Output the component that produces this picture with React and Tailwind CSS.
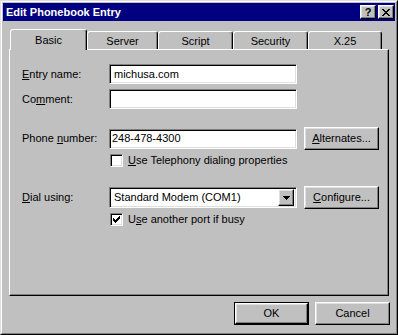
import React from 'react';

const raised = 'border border-t-white border-l-white border-r-black border-b-black shadow-[inset_-1px_-1px_#808080,inset_1px_1px_#dfdfdf]';
const sunken = 'border border-t-[#808080] border-l-[#808080] border-r-white border-b-white shadow-[inset_1px_1px_#000,inset_-1px_-1px_#dfdfdf]';

const Btn = ({ children, isDefault }) => {
    if (isDefault) {
        return (
            <div className="w-[75px] h-[23px] border border-black">
                <div className={`h-full flex items-center justify-center ${raised}`}>{children}</div>
            </div>
        );
    }
    return <div className={`w-[75px] h-[23px] flex items-center justify-center ${raised}`}>{children}</div>;
};

const Check = ({ checked }) => (
    <div className={`w-[13px] h-[13px] bg-white shrink-0 ${sunken} flex items-center justify-center`}>
        {checked && (
            <svg width="7" height="7" viewBox="0 0 7 7" shapeRendering="crispEdges">
                <rect x="6" y="0" width="1" height="1" fill="#000" />
                <rect x="5" y="1" width="2" height="1" fill="#000" />
                <rect x="0" y="2" width="1" height="1" fill="#000" />
                <rect x="4" y="2" width="3" height="1" fill="#000" />
                <rect x="0" y="3" width="2" height="1" fill="#000" />
                <rect x="3" y="3" width="3" height="1" fill="#000" />
                <rect x="0" y="4" width="5" height="1" fill="#000" />
                <rect x="1" y="5" width="3" height="1" fill="#000" />
                <rect x="2" y="6" width="1" height="1" fill="#000" />
            </svg>
        )}
    </div>
);

const Tab = ({ label, width, active }) => (
    <div
        className={`${width} flex items-center justify-center rounded-t-[3px] border-l border-t border-r border-t-white border-l-white border-r-black shadow-[inset_-1px_0_#808080] bg-[#c0c0c0] ${
            active ? 'h-[21px] mb-[-1px] relative z-10' : 'h-[18px] pt-[2px]'
        }`}
    >
        {label}
    </div>
);

const Label = ({ children }) => <div className="w-[87px] shrink-0">{children}</div>;

export default function App() {
    return (
        <div
            className="w-[398px] h-[335px] bg-[#c0c0c0] text-black text-[11px] leading-none border border-t-[#dfdfdf] border-l-[#dfdfdf] border-r-black border-b-black select-none"
            style={{ fontFamily: '"Liberation Sans", Arial, sans-serif' }}
        >
            <div className="h-full p-px border border-t-white border-l-white border-r-[#808080] border-b-[#808080] flex flex-col">
                {/* title bar */}
                <div className="h-[18px] bg-[#000080] flex items-center justify-between pl-[3px] pr-[1px]">
                    <span className="text-white font-bold text-[11px]">Edit Phonebook Entry</span>
                    <div className="flex gap-[2px]">
                        <div className={`w-[16px] h-[14px] bg-[#c0c0c0] flex items-center justify-center font-bold text-[11px] ${raised}`}>?</div>
                        <div className={`w-[16px] h-[14px] bg-[#c0c0c0] flex items-center justify-center ${raised}`}>
                            <svg width="8" height="7" viewBox="0 0 8 7" shapeRendering="crispEdges">
                                <path d="M0 0h2v1H0zM6 0h2v1H6zM1 1h2v1H1zM5 1h2v1H5zM2 2h4v1H2zM3 3h2v1H3zM2 4h4v1H2zM1 5h2v1H1zM5 5h2v1H5zM0 6h2v1H0zM6 6h2v1H6z" fill="#000" />
                            </svg>
                        </div>
                    </div>
                </div>

                {/* tabs */}
                <div className="mt-[8px] mx-[6px] h-[20px] flex items-end pl-px">
                    <Tab label="Basic" width="w-[77px]" active />
                    <Tab label="Server" width="w-[71px]" />
                    <Tab label="Script" width="w-[75px]" />
                    <Tab label="Security" width="w-[75px]" />
                    <Tab label="X.25" width="w-[74px]" />
                </div>

                {/* panel */}
                <div className="mx-[6px] h-[247px] border border-t-white border-l-white border-r-black border-b-black shadow-[inset_-1px_-1px_#808080] pl-[12px] pt-[14px] flex flex-col">
                    <div className="flex items-center h-[20px]">
                        <Label><span className="underline">E</span>ntry name:</Label>
                        <div className={`w-[188px] h-[20px] bg-white flex items-center pl-[4px] ${sunken}`}>michusa.com</div>
                    </div>
                    <div className="flex items-center h-[20px] mt-[5px]">
                        <Label>Co<span className="underline">m</span>ment:</Label>
                        <div className={`w-[188px] h-[20px] bg-white ${sunken}`} />
                    </div>
                    <div className="flex items-center h-[23px] mt-[18px]">
                        <Label>Phone <span className="underline">n</span>umber:</Label>
                        <div className={`w-[188px] h-[20px] bg-white flex items-center pl-[2px] ${sunken}`}>248-478-4300</div>
                        <div className="ml-[7px]">
                            <Btn><span className="underline">A</span>lternates...</Btn>
                        </div>
                    </div>
                    <div className="flex items-center gap-[5px] h-[13px] mt-[4px] ml-[88px]">
                        <Check />
                        <span><span className="underline">U</span>se Telephony dialing properties</span>
                    </div>
                    <div className="flex items-center h-[23px] mt-[19px]">
                        <Label><span className="underline">D</span>ial using:</Label>
                        <div className={`w-[188px] h-[21px] bg-white flex items-center justify-between pl-[4px] pr-[2px] ${sunken}`}>
                            <span>Standard Modem (COM1)</span>
                            <div className={`w-[16px] h-[17px] bg-[#c0c0c0] flex items-center justify-center ${raised}`}>
                                <svg width="7" height="4" viewBox="0 0 7 4" shapeRendering="crispEdges">
                                    <path d="M0 0h7v1H0zM1 1h5v1H1zM2 2h3v1H2zM3 3h1v1H3z" fill="#000" />
                                </svg>
                            </div>
                        </div>
                        <div className="ml-[7px]">
                            <Btn><span className="underline">C</span>onfigure...</Btn>
                        </div>
                    </div>
                    <div className="flex items-center gap-[5px] h-[13px] mt-[4px] ml-[88px]">
                        <Check checked />
                        <span>U<span className="underline">s</span>e another port if busy</span>
                    </div>
                </div>

                {/* dialog buttons */}
                <div className="mt-[6px] flex justify-end gap-[6px] pr-[5px]">
                    <Btn isDefault>OK</Btn>
                    <Btn>Cancel</Btn>
                </div>
            </div>
        </div>
    );
}
